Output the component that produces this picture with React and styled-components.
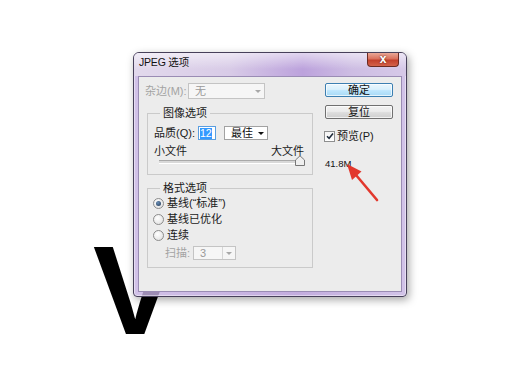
import React from 'react';
import styled, { createGlobalStyle } from 'styled-components';

const GlobalStyle = createGlobalStyle`
  html, body {
    margin: 0;
    padding: 0;
    background: #fff;
  }
  body {
    font-family: "Liberation Sans", "Noto Sans CJK SC", sans-serif;
  }
`;

const Stage = styled.div`
  position: relative;
  width: 520px;
  height: 390px;
  overflow: hidden;
  background: #fff;
`;

const BigLetter = styled.span`
  position: absolute;
  left: 93px;
  top: 228px;
  font: bold 126px/1 "Liberation Sans", sans-serif;
  color: #000;
  z-index: 0;
`;

const Window = styled.div`
  position: absolute;
  left: 133px;
  top: 52px;
  width: 274px;
  height: 245px;
  box-sizing: border-box;
  border: 1px solid #47405a;
  border-radius: 6px 6px 4px 4px;
  background: linear-gradient(90deg, rgba(198, 178, 226, 0.8), rgba(180, 152, 214, 0.8) 60%, rgba(198, 180, 226, 0.8));
  box-shadow: 2px 3px 8px rgba(0, 0, 0, 0.35), inset 0 0 0 1px rgba(255, 255, 255, 0.45);
  display: flex;
  flex-direction: column;
  z-index: 1;
`;

const TitleBar = styled.div`
  height: 23px;
  display: flex;
  align-items: flex-start;
  padding: 0 7px 0 5px;
  border-radius: 5px 5px 0 0;
  background:
    linear-gradient(180deg, rgba(255, 255, 255, 0.55), rgba(255, 255, 255, 0) 70%),
    linear-gradient(90deg, #e2d9ec 0%, #d8cbe7 35%, #bca2dc 62%, #cdbde3 80%, #d6c9e8 100%);
`;

const Title = styled.span`
  font-size: 10.5px;
  line-height: 19px;
  color: #111;
  letter-spacing: -0.2px;
`;

const CloseButton = styled.div`
  margin-left: auto;
  width: 32px;
  height: 14px;
  box-sizing: border-box;
  border: 1px solid #6b2a22;
  border-top: none;
  border-radius: 0 0 4px 4px;
  background: linear-gradient(180deg, #e9a897 0%, #d9705c 45%, #c2402c 55%, #d4624a 100%);
  color: #fff;
  font: bold 12px/12px "Liberation Sans", sans-serif;
  text-align: center;
  text-shadow: 0 0 2px #5a1a12;
`;

const Body = styled.div`
  flex: 1;
  display: flex;
  padding: 0 4px 4px;
`;

const Client = styled.div`
  flex: 1;
  display: flex;
  padding: 6px 0 0 6px;
  background: #ececec;
  border: 1px solid #9a8cb4;
  font-size: 11px;
  line-height: 14px;
  color: #1a1a1a;
`;

const LeftCol = styled.div`
  width: 168px;
  display: flex;
  flex-direction: column;
`;

const RightCol = styled.div`
  margin-left: 12px;
  display: flex;
  flex-direction: column;
`;

const FieldRow = styled.div`
  display: flex;
  align-items: center;
  height: ${(p) => p.$h || 16}px;
  margin-top: ${(p) => p.$mt || 0}px;
  padding-left: ${(p) => p.$indent || 0}px;
`;

const Label = styled.span`
  width: ${(p) => p.$w}px;
  color: ${(p) => (p.$disabled ? '#a3a3a3' : '#1a1a1a')};
  line-height: 12px;
  white-space: nowrap;
`;

const SelectBox = styled.div`
  width: ${(p) => p.$w}px;
  height: ${(p) => p.$h}px;
  box-sizing: border-box;
  display: flex;
  align-items: center;
  border: 1px solid ${(p) => (p.$disabled ? '#c4c4c4' : '#a2a2a2')};
  background: ${(p) => (p.$disabled ? '#f6f6f6' : '#fff')};
  color: ${(p) => (p.$disabled ? '#9a9a9a' : '#111')};
  padding-left: 6px;
  margin-left: ${(p) => p.$ml || 0}px;
`;

const SelectValue = styled.span`
  flex: 1;
  line-height: 12px;
`;

const ArrowCell = styled.span`
  width: 12px;
  align-self: stretch;
  display: flex;
  align-items: center;
  justify-content: center;
  border-left: ${(p) => (p.$divider ? '1px solid #d6d6d6' : 'none')};
  &::after {
    content: '';
    border-left: 3px solid transparent;
    border-right: 3px solid transparent;
    border-top: 3px solid ${(p) => (p.$disabled ? '#a8a8a8' : '#111')};
  }
`;

const Group = styled.fieldset`
  margin: ${(p) => p.$mt}px 0 0 2px;
  width: 166px;
  box-sizing: border-box;
  min-width: 0;
  border: 1px solid #cacaca;
  padding: 0 0 ${(p) => p.$pb}px 0;
`;

const Legend = styled.legend`
  margin-left: 12px;
  padding: 0 3px;
  line-height: 14px;
  color: #1a1a1a;
`;

const GroupInner = styled.div`
  padding-left: ${(p) => p.$pl}px;
  display: flex;
  flex-direction: column;
`;

const NumberInput = styled.div`
  width: 18px;
  height: 14px;
  box-sizing: border-box;
  border: 1px solid #5a9ee0;
  background: #fff;
  display: flex;
  align-items: center;
  padding-left: 1px;
`;

const Selected = styled.span`
  background: #3399ff;
  color: #fff;
  line-height: 11px;
  font-size: 10.5px;
`;

const SizeLabels = styled.div`
  display: flex;
  justify-content: space-between;
  line-height: 12px;
  margin-top: 5px;
  padding-right: 8px;
`;

const Slider = styled.div`
  position: relative;
  margin-left: 5px;
  width: 141px;
  height: 9px;
  display: flex;
  align-items: center;
`;

const Track = styled.div`
  width: 100%;
  height: 2px;
  border-top: 1px solid #a8a8a8;
  border-bottom: 1px solid #fff;
  background: #d8d8d8;
`;

const Thumb = styled.svg`
  position: absolute;
  right: -5px;
  top: -2px;
`;

const RadioRow = styled.div`
  display: flex;
  align-items: center;
  height: 16px;
  line-height: 12px;
  gap: 3px;
`;

const Radio = styled.span`
  width: 11px;
  height: 11px;
  box-sizing: border-box;
  border-radius: 50%;
  border: 1px solid #8c8c8c;
  background: radial-gradient(circle at 40% 35%, #ffffff, #dcdcdc);
  display: flex;
  align-items: center;
  justify-content: center;
  &::after {
    content: '';
    display: ${(p) => (p.$checked ? 'block' : 'none')};
    width: 5px;
    height: 5px;
    border-radius: 50%;
    background: radial-gradient(circle at 40% 35%, #6a8fb8, #1f3550);
  }
`;

const Button = styled.div`
  width: 68px;
  height: 14px;
  box-sizing: border-box;
  margin-top: ${(p) => p.$mt || 0}px;
  border: 1px solid ${(p) => (p.$primary ? '#3c7fb1' : '#707070')};
  border-radius: 2px;
  background: ${(p) => (p.$primary
    ? 'linear-gradient(180deg, #eaf6fd 0%, #d9f0fc 45%, #bee6fd 55%, #a7d9f5 100%)'
    : 'linear-gradient(180deg, #f2f2f2 0%, #ebebeb 45%, #dddddd 55%, #cfcfcf 100%)')};
  box-shadow: inset 0 0 0 1px rgba(255, 255, 255, 0.7);
  text-align: center;
  line-height: 12px;
  color: #111;
`;

const CheckRow = styled.div`
  display: flex;
  align-items: center;
  gap: 2px;
  margin-top: 11px;
  height: 12px;
  line-height: 12px;
  margin-left: -1px;
`;

const CheckBox = styled.span`
  width: 11px;
  height: 11px;
  box-sizing: border-box;
  border: 1px solid #8e8f8f;
  background: linear-gradient(180deg, #f4f4f4, #fff);
  display: flex;
  align-items: center;
  justify-content: center;
`;

const SizeText = styled.span`
  margin-top: 16px;
  font-size: 9.5px;
  line-height: 12px;
  color: #111;
`;

const Pointer = styled.svg`
  position: absolute;
  left: 340px;
  top: 158px;
  z-index: 2;
`;

const Select = ({
  value, w, h, ml, disabled, divider,
}) => (
  <SelectBox $w={w} $h={h} $ml={ml} $disabled={disabled}>
    <SelectValue>{value}</SelectValue>
    <ArrowCell $disabled={disabled} $divider={divider} />
  </SelectBox>
);

const App = () => (
  <Stage>
    <GlobalStyle />
    <BigLetter>V</BigLetter>
    <Window>
      <TitleBar>
        <Title>JPEG 选项</Title>
        <CloseButton>x</CloseButton>
      </TitleBar>
      <Body>
        <Client>
          <LeftCol>
            <FieldRow>
              <Label $w={43} $disabled>杂边(M):</Label>
              <Select value="无" w={77} h={16} disabled />
            </FieldRow>

            <Group $mt={7} $pb={8}>
              <Legend>图像选项</Legend>
              <GroupInner $pl={6}>
                <FieldRow $h={14} $mt={6}>
                  <Label $w={44}>品质(Q):</Label>
                  <NumberInput><Selected>12</Selected></NumberInput>
                  <Select value="最佳" w={44} h={14} ml={8} />
                </FieldRow>
                <SizeLabels>
                  <span>小文件</span>
                  <span>大文件</span>
                </SizeLabels>
                <Slider>
                  <Track />
                  <Thumb width="10" height="11" viewBox="0 0 10 11">
                    <polygon points="0.5,10.5 0.5,5 5,0.8 9.5,5 9.5,10.5" fill="#efefef" stroke="#777" strokeWidth="1" />
                  </Thumb>
                </Slider>
              </GroupInner>
            </Group>

            <Group $mt={6} $pb={7}>
              <Legend>格式选项</Legend>
              <GroupInner $pl={5}>
                <RadioRow><Radio $checked />基线(“标准”)</RadioRow>
                <RadioRow><Radio />基线已优化</RadioRow>
                <RadioRow><Radio />连续</RadioRow>
                <FieldRow $h={14} $indent={12} $mt={3}>
                  <Label $w={28} $disabled>扫描:</Label>
                  <Select value="3" w={43} h={14} disabled divider />
                </FieldRow>
              </GroupInner>
            </Group>
          </LeftCol>

          <RightCol>
            <Button $primary>确定</Button>
            <Button $mt={8}>复位</Button>
            <CheckRow>
              <CheckBox>
                <svg width="8" height="8" viewBox="0 0 8 8">
                  <path d="M1 4.2 L3.1 6.3 L7 1.5" fill="none" stroke="#1e2a3a" strokeWidth="1.5" />
                </svg>
              </CheckBox>
              预览(P)
            </CheckRow>
            <SizeText>41.8M</SizeText>
          </RightCol>
        </Client>
      </Body>
    </Window>
    <Pointer width="45" height="48" viewBox="0 0 45 48">
      <line x1="16" y1="17" x2="37" y2="42" stroke="#e2382d" strokeWidth="2.6" strokeLinecap="round" />
      <polygon points="7,6 21.5,13.5 12,22" fill="#e2382d" />
    </Pointer>
  </Stage>
);

export default App;
